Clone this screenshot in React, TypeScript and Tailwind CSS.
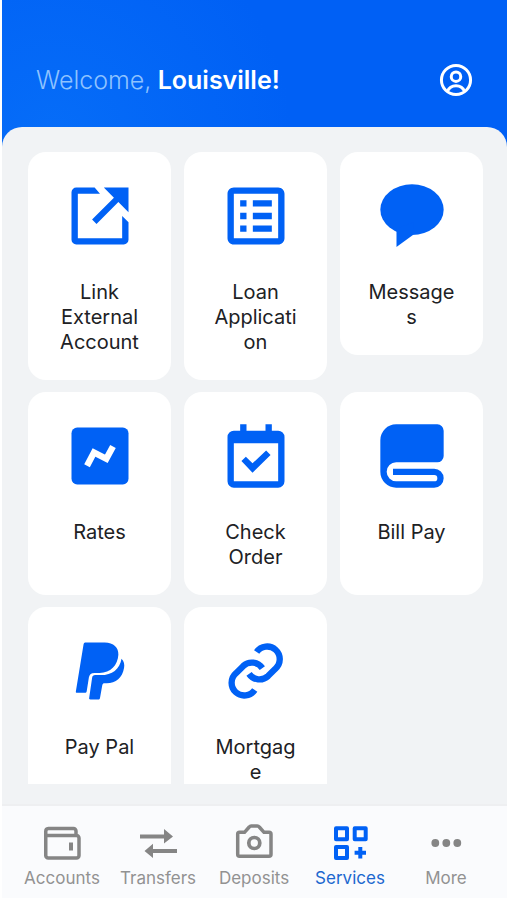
import type { ReactNode } from 'react';

type Service = {
  label: string;
  icon: ReactNode;
};

type Tab = {
  label: string;
  icon: ReactNode;
  active?: boolean;
};

const services: Service[] = [
  {
    label: 'Link External Account',
    icon: (
      <>
        <path d="M10.3 3H4.5A1.5 1.5 0 0 0 3 4.5V19.5A1.5 1.5 0 0 0 4.5 21H19.5A1.5 1.5 0 0 0 21 19.5V14L19 12V19H5V5H12Z" />
        <path d="M13.2 3H21V10.8L17.8 7.6L10.9 14.5L9.5 13.1L16.4 6.2Z" />
      </>
    ),
  },
  {
    label: 'Loan Application',
    icon: (
      <path d="M11 15H17V17H11V15M9 7H7V9H9V7M11 13H17V11H11V13M11 9H17V7H11V9M9 11H7V13H9V11M21 5V19C21 20.1 20.1 21 19 21H5C3.89 21 3 20.1 3 19V5C3 3.9 3.9 3 5 3H19C20.1 3 21 3.9 21 5M19 5H5V19H19V5M9 15H7V17H9V15Z" />
    ),
  },
  {
    label: 'Messages',
    icon: (
      <>
        <ellipse cx="12" cy="10" rx="10" ry="8" />
        <path d="M7.1 16V21.8L12.4 17.9V14Z" />
      </>
    ),
  },
  {
    label: 'Rates',
    icon: (
      <>
        <rect x="3" y="3" width="18" height="18" rx="1.8" />
        <path d="M7.9 15.1L10.1 10.9L14 12.9L16.1 9" fill="none" stroke="white" strokeWidth="2" />
      </>
    ),
  },
  {
    label: 'Check Order',
    icon: (
      <>
        <path
          fillRule="evenodd"
          d="M7 2H9V4H15V2H17V4H19A2 2 0 0 1 21 6V20A2 2 0 0 1 19 22H5A2 2 0 0 1 3 20V6A2 2 0 0 1 5 4H7ZM5 8V20H19V8Z"
        />
        <path d="M7.4 13.6L8.8 12.2L10.9 14.3L15.2 10.3L16.6 11.7L10.9 17.3Z" />
      </>
    ),
  },
  {
    label: 'Bill Pay',
    icon: (
      <path d="M7 2H20A2 2 0 0 1 22 4V12A2 2 0 0 1 20 14H7A3 3 0 0 0 7 20H19A1 1 0 0 0 19 18H6V16H19A3 3 0 0 1 19 22H7A5 5 0 0 1 2 17V7A5 5 0 0 1 7 2Z" />
    ),
  },
  {
    label: 'Pay Pal',
    icon: (
      <>
        <path d="M7.5 3H13.5C16.3 3 17.9 4.6 17.8 6.9C17.6 10.3 15.3 12.6 11.9 12.6H10.3C9.2 12.6 8.7 13 8.5 14L7.8 18.4C7.7 18.8 7.6 18.9 7.2 18.9H4.8C4.4 18.9 4.3 18.7 4.4 18.3L6.8 3.6C6.9 3.2 7.1 3 7.5 3Z" />
        <path d="M18.8 8.1C19.6 8.9 19.8 9.9 19.6 11C19.1 14.2 17 15.9 14.1 15.9H13.5C13 15.9 12.8 16.1 12.7 16.6L12 20.5C11.9 20.9 11.8 21 11.4 21H9C8.6 21 8.5 20.8 8.6 20.4L9.5 14.2C9.6 13.6 9.9 13.3 10.5 13.3H12.2C15.9 13.3 18.2 11.4 18.8 8.1Z" />
      </>
    ),
  },
  {
    label: 'Mortgage',
    icon: (
      <g fill="none" stroke="currentColor" strokeWidth="2">
        <path d="M12.2 6A4 4 0 1 1 18.1 11.3L15.8 13.6A4 4 0 0 1 9.8 12.9" />
        <path d="M12.2 6A4 4 0 1 1 18.1 11.3L15.8 13.6A4 4 0 0 1 9.8 12.9" transform="rotate(180 11.9 12)" />
      </g>
    ),
  },
];

// Tab icons are drawn on a 40x36 canvas
const tabs: Tab[] = [
  {
    label: 'Accounts',
    icon: (
      <g fill="none" stroke="currentColor" strokeWidth="3.5">
        <path d="M34 11.5V7a2.500 2.500 0 0 0-2.500-2.500H6.500A3 3 0 0 0 3.750 7.500V31.500a2.500 2.500 0 0 0 2.500 2.500H34.500a2.500 2.500 0 0 0 2.500-2.500V14a2.500 2.500 0 0 0-2.500-2.500H3.750" />
        <path d="M29 18.500V26.500" strokeWidth="4" />
      </g>
    ),
  },
  {
    label: 'Transfers',
    icon: (
      <>
        <path d="M2 10.500H26V5L35 12.500L26 19.500V14.500H2Z" />
        <path d="M39 25H15V19.800L6.500 27L15 34V29H39Z" />
      </>
    ),
  },
  {
    label: 'Deposits',
    icon: (
      <g fill="none" stroke="currentColor" strokeWidth="3.5">
        <path d="M5.500 8.300H10.500L15.200 3Q16 2 17.200 2H23.300Q24.500 2 25.300 3L30 8.300H35Q37 8.300 37 10.300V30.200Q37 32.200 35 32.200H5.500Q3.700 32.200 3.700 30.200V10.300Q3.700 8.300 5.500 8.300Z" />
        <circle cx="20.300" cy="19" r="5.500" strokeWidth="3.700" />
      </g>
    ),
  },
  {
    label: 'Services',
    active: true,
    icon: (
      <g fill="none" stroke="currentColor" strokeWidth="4" strokeLinejoin="round">
        <rect x="6" y="4.300" width="11" height="11" />
        <rect x="24.700" y="4.300" width="11" height="11" />
        <rect x="6" y="23" width="11" height="11" />
        <path d="M30.300 23V34.400M24.600 28.700H36" />
      </g>
    ),
  },
  {
    label: 'More',
    icon: (
      <>
        <circle cx="9.300" cy="19" r="3.900" />
        <circle cx="20.300" cy="19" r="3.900" />
        <circle cx="31.300" cy="19" r="3.900" />
      </>
    ),
  },
];

const Header = () => (
  <header className="flex items-center justify-between pt-[60px] pb-[27px] pl-[34px] pr-8">
    <h1 className="text-[25px] leading-10 font-semibold text-white">
      <span className="font-light text-[#8fc3ff]">Welcome,</span> Louisville!
    </h1>
    <button aria-label="Profile" className="text-white">
      <svg viewBox="0 0 24 24" className="size-[38px]" fill="none" stroke="currentColor" strokeWidth="1.9">
        <circle cx="12" cy="12" r="9.200" />
        <circle cx="12" cy="9.900" r="3" />
        <path d="M6.600 19.200C7.600 16.600 9.400 15.600 12 15.600S16.400 16.600 17.400 19.200" />
      </svg>
    </button>
  </header>
);

const ServiceCard = ({ label, icon }: Service) => (
  <button className="flex min-h-[203px] flex-col items-center gap-[26px] rounded-[18px] bg-white px-[26px] pt-[26px] pb-[25px] text-[#202124]">
    <svg viewBox="0 0 24 24" className="size-[76px] shrink-0 text-[#0061f5]" fill="currentColor">
      {icon}
    </svg>
    <span className="w-full text-xl leading-[25px] wrap-break-word">{label}</span>
  </button>
);

const TabBar = () => (
  <nav className="grid grid-cols-5 border-t-2 border-[#eeeff1] bg-[#fafbfd] pt-[18px] pb-2 pl-3 pr-[13px]">
    {tabs.map((tab) => (
      <a
        key={tab.label}
        href={`#${tab.label.toLowerCase()}`}
        aria-current={tab.active ? 'page' : undefined}
        className={`flex flex-col items-center gap-1.5 ${tab.active ? 'text-[#0061f5]' : 'text-[#858585]'}`}
      >
        <svg viewBox="0 0 40 36" className="h-9 w-10" fill="currentColor">
          {tab.icon}
        </svg>
        <span className={`text-[17px] leading-6 ${tab.active ? 'text-[#1c68cf]' : 'text-[#929292]'}`}>{tab.label}</span>
      </a>
    ))}
  </nav>
);

const App = () => {
  return (
    <div className="h-screen bg-white pb-[2px] pl-[2px] font-['Inter',sans-serif]">
      <div className="flex h-full flex-col bg-[#0060f5] bg-[radial-gradient(circle_at_50px_140px,#066df8,#0060f5_240px)]">
        <Header />
        <main className="flex min-h-0 flex-1 flex-col rounded-t-[20px] bg-[#f1f3f5] pt-[25px] pb-5 pl-[26px] pr-6">
          <div className="min-h-0 flex-1 overflow-y-auto [scrollbar-width:none]">
            <div className="grid grid-cols-3 items-start gap-x-[13px] gap-y-3">
              {services.map((service) => (
                <ServiceCard key={service.label} {...service} />
              ))}
            </div>
          </div>
        </main>
        <TabBar />
      </div>
    </div>
  );
};

export default App;
